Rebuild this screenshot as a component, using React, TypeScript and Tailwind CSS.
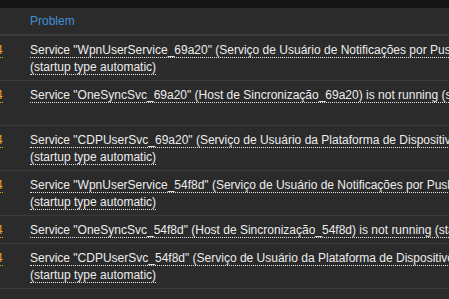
const rows: { line1: string; line2?: string }[] = [
  { line1: 'Service "WpnUserService_69a20" (Serviço de Usuário de Notificações por Push_69a20) is not running', line2: "(startup type automatic)" },
  { line1: 'Service "OneSyncSvc_69a20" (Host de Sincronização_69a20) is not running (startup type automatic)', line2: "" },
  { line1: 'Service "CDPUserSvc_69a20" (Serviço de Usuário da Plataforma de Dispositivos Conectados_69a20) is not running', line2: "(startup type automatic)" },
  { line1: 'Service "WpnUserService_54f8d" (Serviço de Usuário de Notificações por Push_54f8d) is not running', line2: "(startup type automatic)" },
  { line1: 'Service "OneSyncSvc_54f8d" (Host de Sincronização_54f8d) is not running (startup type automatic)' },
  { line1: 'Service "CDPUserSvc_54f8d" (Serviço de Usuário da Plataforma de Dispositivos Conectados_54f8d) is not running', line2: "(startup type automatic)" },
];

export default function App() {
  return (
    <div className="h-[299px] w-[449px] overflow-hidden bg-[#2b2b2b] text-[12px] leading-[17px] text-[#ededed]" style={{ fontFamily: '"Liberation Sans", Arial, sans-serif' }}>
      <div className="h-[8px] bg-[#161616]" />
      <div className="flex h-[28px] items-center border-b-2 border-[#3c3c3c] pt-[1px]">
        <div className="w-[30px] shrink-0" />
        <div className="text-[#3f8fd4]">Problem</div>
      </div>
      {rows.map((row, i) => (
        <div key={i} className="flex border-b border-[#3a3a3a] pt-[6px] pb-[4px] whitespace-nowrap">
          <div className="w-[30px] shrink-0 overflow-hidden">
            <span className="-ml-[4px] inline-block border-b border-dotted border-[#e8a317] leading-[14px] text-[#e8a317]">4</span>
          </div>
          <div>
            <div><span className="border-b border-dotted border-[#e6e6e6]">{row.line1}</span></div>
            {row.line2 !== undefined && (
              <div>{row.line2 ? <span className="border-b border-dotted border-[#e6e6e6]">{row.line2}</span> : "\u00a0"}</div>
            )}
          </div>
        </div>
      ))}
    </div>
  );
}
